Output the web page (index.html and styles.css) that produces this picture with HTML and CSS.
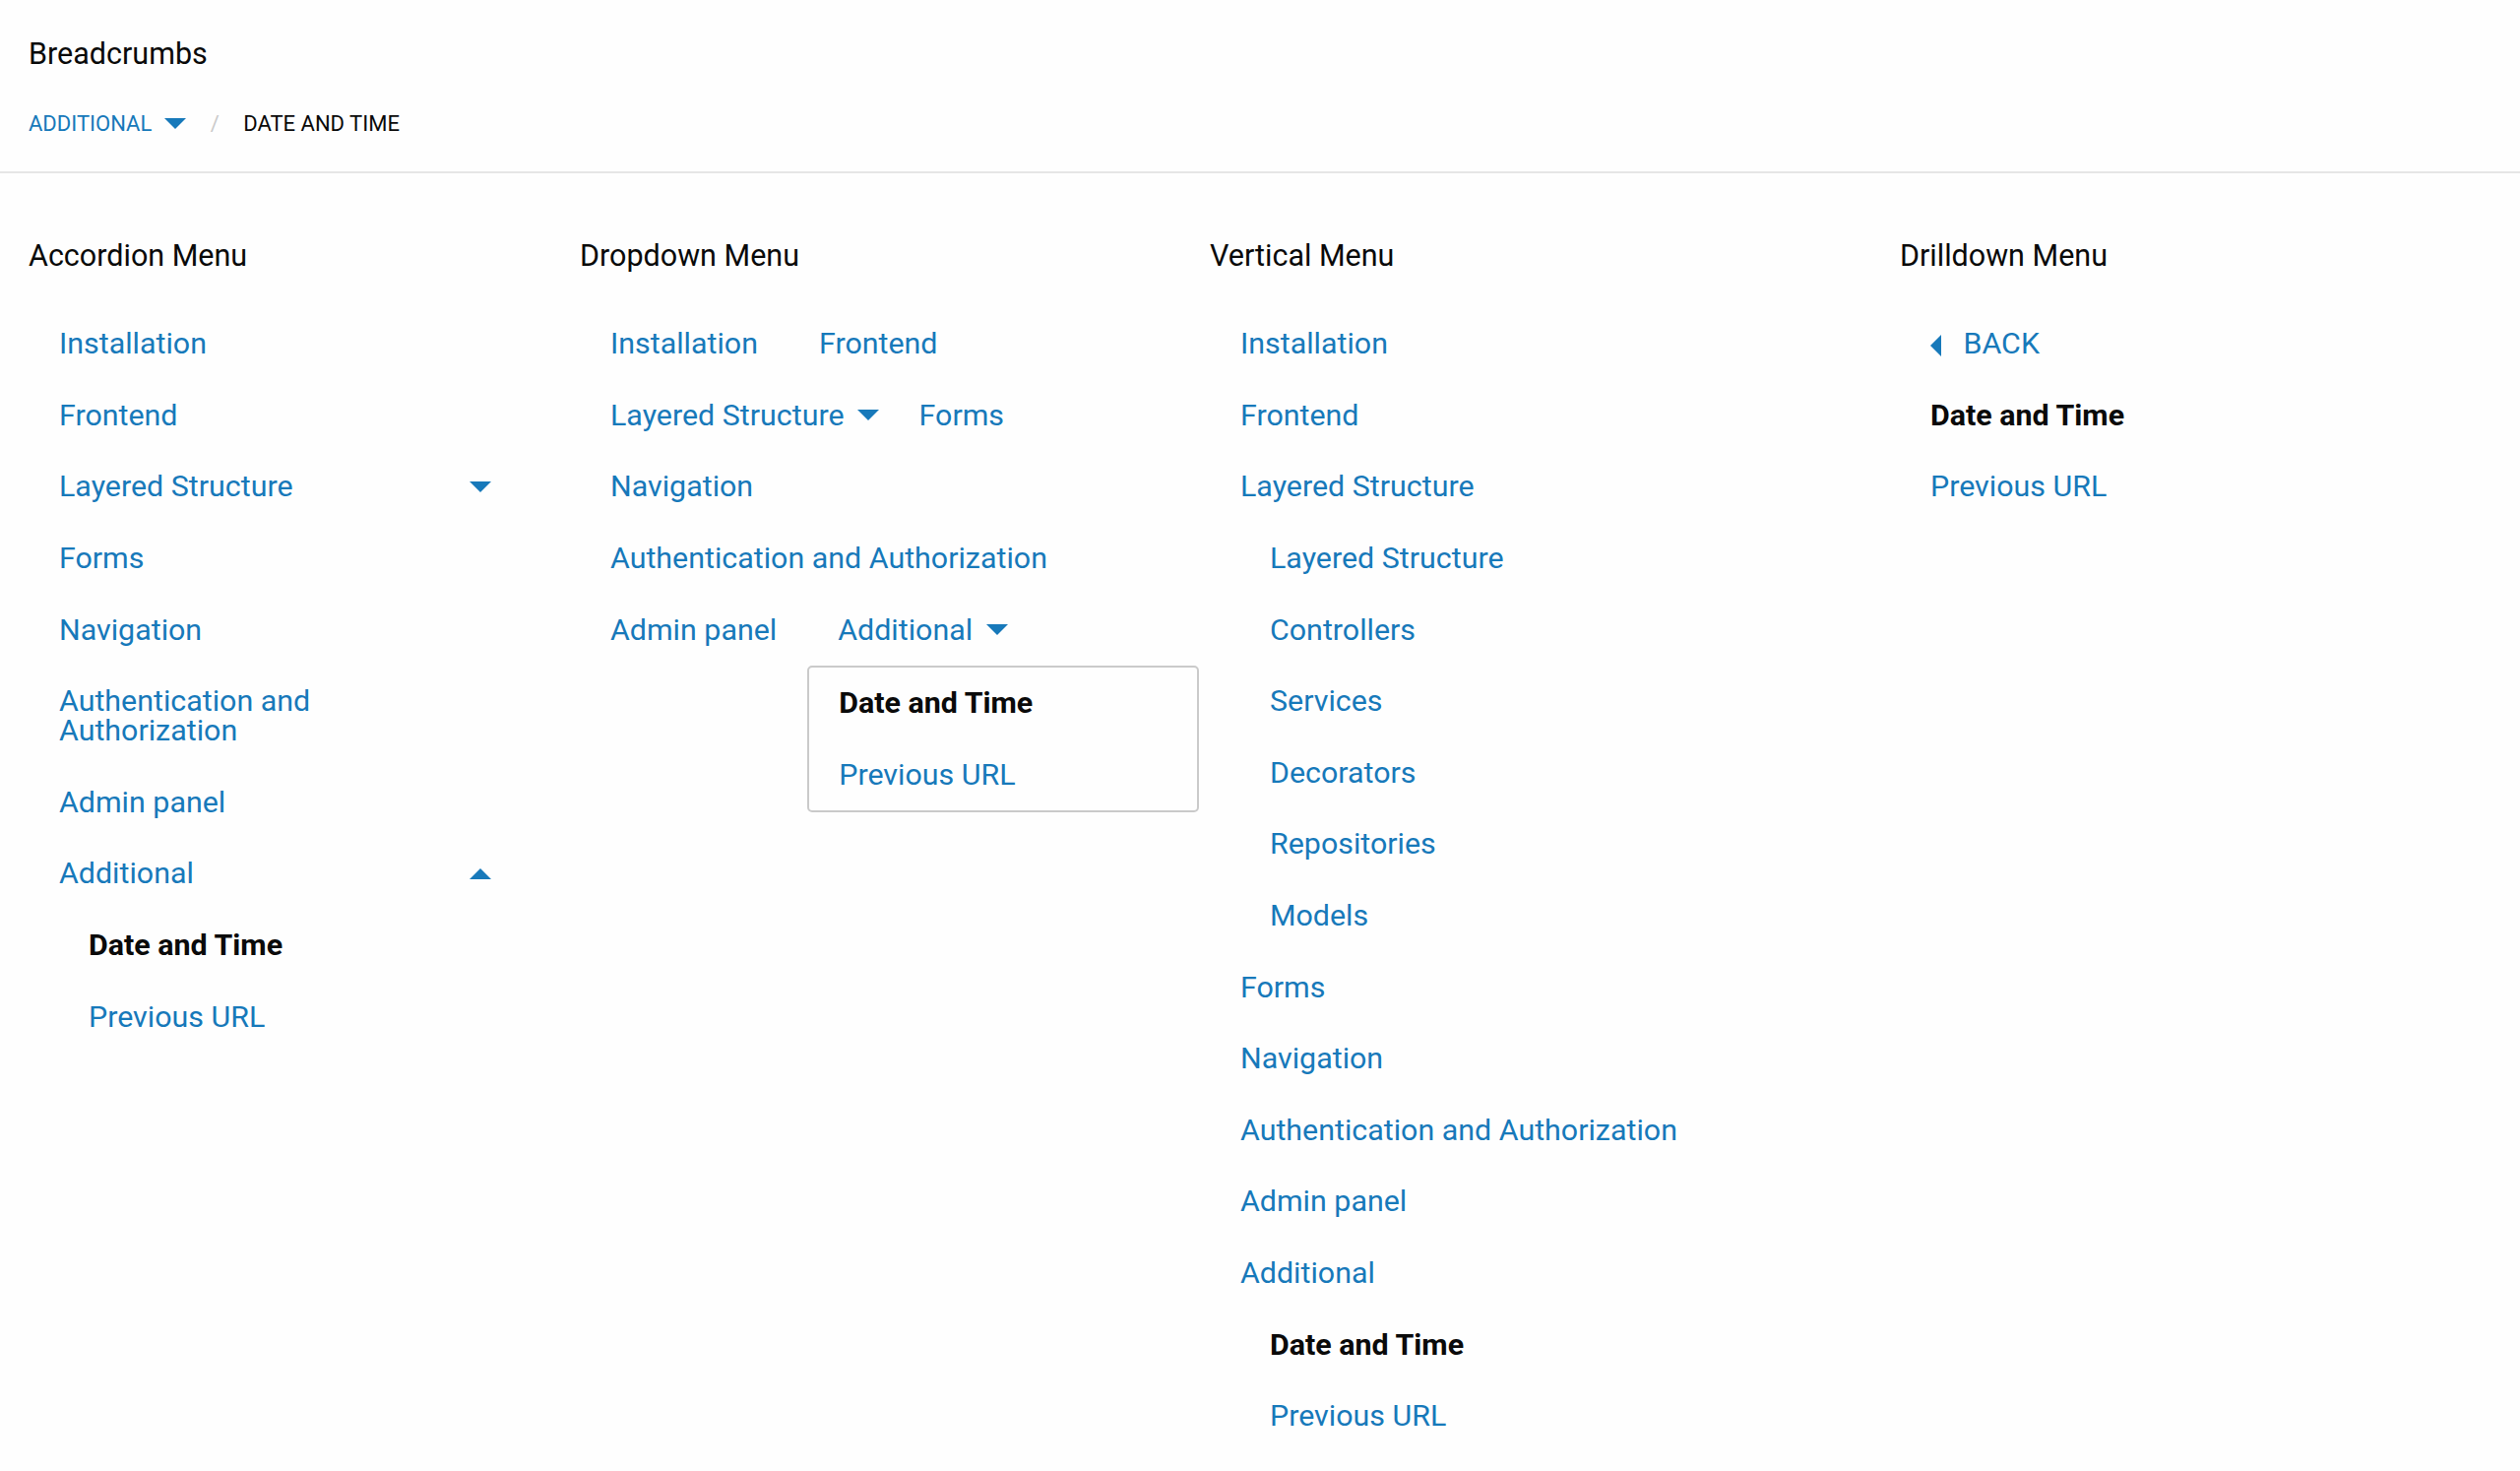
FILE: index.html
```html
<!DOCTYPE html>
<html lang="en">
<head>
<meta charset="utf-8">
<title>Menus</title>
<link rel="stylesheet" href="styles.css">
</head>
<body>
<header class="page-header">
  <h1 class="page-title">Breadcrumbs</h1>
  <ul class="breadcrumbs">
    <li class="crumb crumb-parent"><a href="#">Additional</a><span class="crumb-caret"></span></li>
    <li class="crumb crumb-current">Date and Time</li>
  </ul>
</header>
<main class="menus">
  <section class="menu-col">
    <h2 class="menu-title">Accordion Menu</h2>
    <ul class="menu accordion">
      <li><a href="#">Installation</a></li>
      <li><a href="#">Frontend</a></li>
      <li class="has-sub"><a href="#">Layered Structure</a></li>
      <li><a href="#">Forms</a></li>
      <li><a href="#">Navigation</a></li>
      <li><a href="#">Authentication and Authorization</a></li>
      <li><a href="#">Admin panel</a></li>
      <li class="has-sub open"><a href="#">Additional</a>
        <ul class="menu nested">
          <li class="active"><a href="#">Date and Time</a></li>
          <li><a href="#">Previous URL</a></li>
        </ul>
      </li>
    </ul>
  </section>
  <section class="menu-col">
    <h2 class="menu-title">Dropdown Menu</h2>
    <ul class="menu dropdown">
      <li><a href="#">Installation</a></li>
      <li><a href="#">Frontend</a></li>
      <li class="has-sub"><a href="#">Layered Structure</a></li>
      <li><a href="#">Forms</a></li>
      <li><a href="#">Navigation</a></li>
      <li><a href="#">Authentication and Authorization</a></li>
      <li><a href="#">Admin panel</a></li>
      <li class="has-sub"><a href="#">Additional</a>
        <ul class="menu submenu">
          <li class="active"><a href="#">Date and Time</a></li>
          <li><a href="#">Previous URL</a></li>
        </ul>
      </li>
    </ul>
  </section>
  <section class="menu-col">
    <h2 class="menu-title">Vertical Menu</h2>
    <ul class="menu vertical">
      <li><a href="#">Installation</a></li>
      <li><a href="#">Frontend</a></li>
      <li><a href="#">Layered Structure</a>
        <ul class="menu nested">
          <li><a href="#">Layered Structure</a></li>
          <li><a href="#">Controllers</a></li>
          <li><a href="#">Services</a></li>
          <li><a href="#">Decorators</a></li>
          <li><a href="#">Repositories</a></li>
          <li><a href="#">Models</a></li>
        </ul>
      </li>
      <li><a href="#">Forms</a></li>
      <li><a href="#">Navigation</a></li>
      <li><a href="#">Authentication and Authorization</a></li>
      <li><a href="#">Admin panel</a></li>
      <li><a href="#">Additional</a>
        <ul class="menu nested">
          <li class="active"><a href="#">Date and Time</a></li>
          <li><a href="#">Previous URL</a></li>
        </ul>
      </li>
    </ul>
  </section>
  <section class="menu-col">
    <h2 class="menu-title">Drilldown Menu</h2>
    <ul class="menu drilldown">
      <li class="back"><a href="#">BACK</a></li>
      <li class="active"><a href="#">Date and Time</a></li>
      <li><a href="#">Previous URL</a></li>
    </ul>
  </section>
</main>
</body>
</html>
```

FILE: styles.css
```css
* {
  box-sizing: border-box;
}

html,
body {
  margin: 0;
  padding: 0;
}

body {
  font-family: Roboto, "Liberation Sans", Arial, sans-serif;
  font-size: 30.4px;
  color: #0a0a0a;
  background: #fefefe;
}

a {
  color: #1779ba;
  text-decoration: none;
}

/* Header with breadcrumbs */
.page-header {
  padding: 32px 29px 32px;
  border-bottom: 2px solid #e6e6e6;
}

.page-title {
  margin: 0;
  font-size: 30.5px;
  font-weight: 400;
  line-height: 45px;
}

.breadcrumbs {
  list-style: none;
  margin: 32px 0 0;
  padding: 0;
  display: flex;
  font-size: 22px;
  line-height: 33px;
  text-transform: uppercase;
}

.crumb {
  display: flex;
  align-items: center;
}

.crumb-parent::after {
  content: "/";
  color: #cacaca;
  margin: 0 24.5px;
}

.crumb-caret {
  width: 0;
  height: 0;
  border-left: 11.5px solid transparent;
  border-right: 11.5px solid transparent;
  border-top: 11.5px solid #1779ba;
  margin-left: 13px;
}

/* Columns */
.menus {
  display: grid;
  grid-template-columns: 500px 580px 641px 1fr;
  column-gap: 60px;
  padding: 61px 29px 0;
  align-items: start;
}

.menu-title {
  margin: 0 0 31px;
  font-size: 30.5px;
  font-weight: 400;
  line-height: 45px;
}

.menu {
  list-style: none;
  margin: 0;
  padding: 0;
}

.menu a {
  display: block;
  padding: 21.3px 31px;
  line-height: 30px;
}

.menu .nested {
  margin-left: 30px;
}

.menu .active > a {
  color: #0a0a0a;
  font-weight: 700;
}

/* Accordion */
.accordion a {
  position: relative;
  padding-right: 60px;
}

.accordion .nested a {
  padding-right: 31px;
}

.accordion .has-sub > a::after {
  content: "";
  position: absolute;
  right: 30px;
  top: 50%;
  margin-top: -5.6px;
  width: 0;
  height: 0;
  border: 11.25px solid transparent;
  border-top-color: #1779ba;
  border-bottom-width: 0;
}

.accordion .has-sub.open > a::after {
  transform: rotate(180deg);
}

/* Dropdown */
.dropdown {
  display: flex;
  flex-wrap: wrap;
}

.dropdown > li {
  position: relative;
}

.dropdown .has-sub > a {
  position: relative;
  padding-right: 45px;
}

.dropdown .has-sub > a::after {
  content: "";
  position: absolute;
  right: 9.4px;
  top: 50%;
  margin-top: -5.6px;
  width: 0;
  height: 0;
  border: 11.25px solid transparent;
  border-top-color: #1779ba;
  border-bottom-width: 0;
}

.dropdown .submenu {
  position: absolute;
  top: 100%;
  left: 0;
  width: 398px;
  border: 2px solid #cacaca;
  border-radius: 5px;
  background: #fefefe;
  z-index: 2;
}

.dropdown .submenu a {
  padding-left: 30px;
}

/* Drilldown */
.back > a::before {
  content: "";
  display: inline-block;
  vertical-align: middle;
  width: 0;
  height: 0;
  border-style: solid;
  border-width: 11.25px 11.25px 11.25px 0;
  border-color: transparent #1779ba transparent transparent;
  margin-right: 22.5px;
}
```
